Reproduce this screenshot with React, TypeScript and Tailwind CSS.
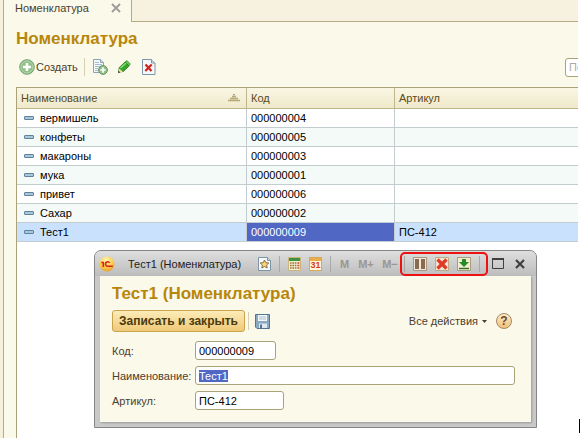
import React, { useEffect, useRef } from "react";

const rows = [
  { name: "вермишель", code: "000000004", article: "" },
  { name: "конфеты", code: "000000005", article: "" },
  { name: "макароны", code: "000000003", article: "" },
  { name: "мука", code: "000000001", article: "" },
  { name: "привет", code: "000000006", article: "" },
  { name: "Сахар", code: "000000002", article: "" },
  { name: "Тест1", code: "000000009", article: "ПС-412" },
];

function PlusCircle({ size }: { size: number }) {
  return (
    <svg width={size} height={size} viewBox="0 0 16 16">
      <circle cx="8" cy="8" r="7.3" fill="#8fc088" stroke="#7a9c74" />
      <circle cx="8" cy="8" r="6" fill="none" stroke="#b4d9ac" />
      <path d="M8 4v8M4 8h8" stroke="#fff" strokeWidth="2.6" />
    </svg>
  );
}

function CopyIcon() {
  return (
    <svg width="16" height="16" viewBox="0 0 16 16">
      <path d="M1.5.5h7l3 3v10h-10z" fill="#f4f8fb" stroke="#8ba3b5" />
      <path d="M8.500.5v3h3" fill="#cfdde8" stroke="#8ba3b5" />
      <path d="M3 3.500h4M3 5.500h7M3 7.500h5M3 9.500h3M3 11.500h3" stroke="#a5bccd" />
      <circle cx="11" cy="11" r="4.400" fill="#8fc088" stroke="#6b9164" />
      <path d="M11 8.300v5.400M8.300 11h5.400" stroke="#fff" strokeWidth="1.700" />
    </svg>
  );
}

function PencilIcon() {
  return (
    <svg width="14" height="14" viewBox="0 0 14 14">
      <path d="M1.500 12l.8-4.500L8 2l4 4-5.700 5.500z" fill="#36a32c" stroke="#1f7a1b" strokeWidth=".8" />
      <path d="M3.500 8l5.500-5" stroke="#8be06f" strokeWidth="1.600" />
      <path d="M8 2l2-1.500L13.300 4 12 6z" fill="#67c653" stroke="#1f7a1b" strokeWidth=".6" />
      <path d="M1.300 12.600l1-4.200 3.600 3.300z" fill="#f3dfa4" />
      <path d="M1 13l.6-2.200 1.700 1.600z" fill="#333" />
    </svg>
  );
}

function DeleteDocIcon() {
  return (
    <svg width="14" height="16" viewBox="0 0 14 16">
      <path d="M.5.5h9l3.500 3.500v11.500H.5z" fill="#f4f8fb" stroke="#7d96ad" />
      <path d="M9.500.5v3.500H13" fill="#c9dae8" stroke="#7d96ad" />
      <path d="M3.500 5.500l6 6.500M9.700 5.500l-6.400 6.500" stroke="#d3211d" strokeWidth="2.200" />
    </svg>
  );
}

function SortIcon() {
  return (
    <svg width="12" height="8" viewBox="0 0 12 8">
      <path d="M5 .5h2M4 2.500h4M2 4.500h8M0 6.500h12" stroke="#b5a877" strokeWidth="1.300" />
    </svg>
  );
}

function LogoIcon() {
  return (
    <svg width="16" height="16" viewBox="0 0 16 16">
      <defs>
        <radialGradient id="logo" cx=".45" cy=".25" r=".8">
          <stop offset="0" stopColor="#fff6b5" />
          <stop offset=".55" stopColor="#fbcf4b" />
          <stop offset="1" stopColor="#e59a2c" />
        </radialGradient>
      </defs>
      <circle cx="8" cy="8" r="7.600" fill="url(#logo)" />
      <path d="M2.300 6.500h2v4.500" fill="none" stroke="#d8231c" strokeWidth="1.600" />
      <path d="M10.600 6.900a2.200 2.200 0 1 0-1.500 3.300h4.700" fill="none" stroke="#d8231c" strokeWidth="1.500" />
    </svg>
  );
}

function StarIcon() {
  return (
    <svg width="13" height="14" viewBox="0 0 13 14">
      <path d="M.5.500h9l3 3v10H.5z" fill="#f6f9fb" stroke="#7e95a8" />
      <path d="M9.500.5v3h3" fill="#c7d6e2" stroke="#7e95a8" />
      <path d="M6.500 3l1.300 2.700 3 .3-2.200 2 .6 3-2.700-1.500L3.800 11l.6-3-2.200-2 3-.3z" fill="#f9d67c" stroke="#80602c" strokeWidth=".9" />
    </svg>
  );
}

function CalculatorIcon() {
  return (
    <svg width="13" height="14" viewBox="0 0 13 14">
      <path d="M.5.5h12v13H.5z" fill="#f6efcf" stroke="#c7b67c" />
      <path d="M1 1h11v3H1z" fill="#3f9142" />
      <path d="M2 6h7M2 8.500h7M2 11h7" stroke="#96703d" strokeWidth="1.300" strokeDasharray="1.600 .8" />
      <path d="M9.400 6h2M9.400 8.500h2M9.400 11h2" stroke="#c44b32" strokeWidth="1.300" />
    </svg>
  );
}

function CalendarIcon() {
  return (
    <span className="flex h-[14px] w-[13px] flex-col border border-[#d8a955] bg-[#fff6d8]">
      <span className="h-[3px] shrink-0 bg-[#e9ac4b]" />
      <span className="text-center text-[9px] leading-[9px] font-bold text-[#d2401f]">31</span>
    </span>
  );
}

function PanelsIcon() {
  return (
    <svg width="14" height="14" viewBox="0 0 14 14">
      <path d="M.5.5h13v13H.5z" fill="#eee6d6" stroke="#aa977c" />
      <path d="M2 2h4v10H2zM8 2h4v10H8z" fill="#8a6a50" />
    </svg>
  );
}

function RedCrossIcon() {
  return (
    <svg width="14" height="14" viewBox="0 0 14 14">
      <path d="M.5.5h13v13H.5z" fill="#f1e7d0" stroke="#bfa980" />
      <path d="M2.500 2.500l9 9M11.500 2.500l-9 9" stroke="#e13b2b" strokeWidth="3.400" />
    </svg>
  );
}

function DownloadIcon() {
  return (
    <svg width="14" height="14" viewBox="0 0 14 14">
      <path d="M.5.5h13v13H.5z" fill="#f1ecd2" stroke="#aa9c78" />
      <path d="M5 2h4v3h3l-5 5-5-5h3z" fill="#278c26" />
      <path d="M2 11.500h10" stroke="#2f6b2c" strokeWidth="1.400" />
    </svg>
  );
}

function FloppyIcon() {
  return (
    <svg width="15" height="15" viewBox="0 0 15 15">
      <path d="M.5.5h14v14H2l-1.500-1.500z" fill="#8aaac2" stroke="#54758f" />
      <path d="M3 1h9v6H3z" fill="#f5f9fc" />
      <path d="M4 3h7M4 5h7" stroke="#a9bccb" />
      <path d="M4 9.500h8V14H4z" fill="#dde8f0" />
      <path d="M5 10.500h2V14H5z" fill="#54758f" />
    </svg>
  );
}

function Divider() {
  return <span className="h-4 w-px shrink-0 bg-[#a9a9a9]" />;
}

const field =
  "h-[19px] rounded-[3px] border border-[#aaa27a] bg-white px-[3px] text-[11px] text-black outline-none selection:bg-[#5068c4] selection:text-white";

function ItemDialog() {
  const nameRef = useRef<HTMLInputElement>(null);
  useEffect(() => {
    nameRef.current?.focus();
    nameRef.current?.select();
  }, []);

  return (
    <section
      role="dialog"
      aria-label="Тест1 (Номенклатура)"
      className="absolute top-[250px] right-[45px] left-[94px] rounded-t-[7px] border border-[#858585] bg-[#c9c9c9]"
    >
      <header className="flex h-[25px] items-center rounded-t-[6px] bg-linear-to-b from-[#dedede] to-[#bdbdbd] pr-[11px] pl-1">
        <LogoIcon />
        <span className="ml-[13px] whitespace-nowrap text-[#222]">Тест1 (Номенклатура)</span>
        <div className="ml-auto flex items-center gap-2 text-[11px] font-bold text-[#9b9590]">
          <button type="button" aria-label="Избранное"><StarIcon /></button>
          <Divider />
          <button type="button" aria-label="Калькулятор"><CalculatorIcon /></button>
          <button type="button" aria-label="Календарь"><CalendarIcon /></button>
          <Divider />
          <button type="button" className="w-[11px]">M</button>
          <button type="button" className="w-4">M+</button>
          <button type="button" className="w-4">M−</button>
        </div>
        <div className="relative ml-[6px] flex items-center gap-2 pr-2">
          <Divider />
          <button type="button" aria-label="Панели"><PanelsIcon /></button>
          <button type="button" aria-label="Отменить"><RedCrossIcon /></button>
          <button type="button" aria-label="Загрузить"><DownloadIcon /></button>
          <Divider />
          <span className="pointer-events-none absolute -inset-y-1 right-0 -left-1 rounded-[5px] border-2 border-[#ee1111]" />
        </div>
        <button type="button" aria-label="Развернуть" className="ml-1">
          <svg width="12" height="11" viewBox="0 0 12 11">
            <path d="M.5 1h11v9.500H.5z" fill="none" stroke="#3f3f3f" />
            <path d="M0 1h12" stroke="#3f3f3f" strokeWidth="2" />
          </svg>
        </button>
        <button type="button" aria-label="Закрыть" className="ml-[11px]">
          <svg width="10" height="10" viewBox="0 0 10 10">
            <path d="M1 1l8 8M9 1L1 9" stroke="#3f3f3f" strokeWidth="2.200" />
          </svg>
        </button>
      </header>

      <div className="mx-[5px] mb-[5px] bg-[#fbf9e9] px-3 pt-2 pb-3 shadow-[1px_1px_2px_#999]">
        <h2 className="text-[17px] leading-5 font-bold whitespace-nowrap text-[#b8860b]">Тест1 (Номенклатура)</h2>
        <div className="mt-[6px] flex items-center">
          <button
            type="button"
            className="h-[22px] w-[133px] rounded-[3px] border border-[#c9a44c] bg-linear-to-b from-[#fcecb8] to-[#efc978] text-[12px] font-bold whitespace-nowrap text-[#4d3a0c]"
          >
            Записать и закрыть
          </button>
          <span className="ml-[3px] h-[18px] w-px bg-[#d6d0b0]" />
          <button type="button" aria-label="Записать" className="ml-[6px]"><FloppyIcon /></button>
          <button type="button" className="ml-auto flex items-center gap-1 text-[#4b4030]">
            Все действия
            <svg width="5" height="3" viewBox="0 0 5 3"><path d="M0 0h5L2.500 3z" fill="#4b4030" /></svg>
          </button>
          <button
            type="button"
            aria-label="Справка"
            className="mr-[7px] ml-[9px] h-4 w-4 rounded-full border border-[#a58a66] bg-linear-to-b from-[#fdebc8] to-[#f3bf78] text-[12px] leading-[14px] font-bold text-[#6a4a2a]"
          >
            ?
          </button>
        </div>
        <form className="mt-[9px] grid grid-cols-[83px_1fr] items-center gap-y-[6px] pr-1 text-[#4b4030]">
          <label htmlFor="code">Код:</label>
          <input id="code" defaultValue="000000009" className={`${field} w-[81px]`} />
          <label htmlFor="name">Наименование:</label>
          <input id="name" ref={nameRef} defaultValue="Тест1" className={`${field} w-full`} />
          <label htmlFor="article">Артикул:</label>
          <input id="article" defaultValue="ПС-412" className={`${field} w-[89px]`} />
        </form>
      </div>
    </section>
  );
}

export default function App() {
  return (
    <div className="relative flex h-screen w-full overflow-hidden bg-white font-['Liberation_Sans',Arial,sans-serif] text-[11px] leading-[14px]">
      <div className="w-1 shrink-0 border-r border-[#b5ac85] bg-[#f6f0da]" />
      <main className="flex min-w-0 flex-1 flex-col overflow-hidden bg-[#fbf9e9]">
        <nav className="flex h-[22px] shrink-0">
          <div className="flex w-[127px] shrink-0 items-center justify-between pr-[10px] pb-[6px] pl-[11px] text-[#4b4030]">
            <span>Номенклатура</span>
            <button type="button" aria-label="Закрыть вкладку">
              <svg width="10" height="10" viewBox="0 0 10 10">
                <path d="M1 1l8 8M9 1L1 9" stroke="#9b9b9b" strokeWidth="1.800" />
              </svg>
            </button>
          </div>
          <div className="flex-1 border-b border-l border-[#b5ac85] bg-[#f7f2df]" />
        </nav>

        <h1 className="mt-[7px] pl-3 text-[17px] leading-5 font-bold text-[#b8860b]">Номенклатура</h1>

        <div className="mt-2 flex h-5 shrink-0 items-center pl-[15px]">
          <button type="button" className="flex items-center gap-px text-[#4b4030]">
            <PlusCircle size={16} />
            Создать
          </button>
          <span className="ml-[6px] h-[18px] w-px bg-[#d6d0b0]" />
          <button type="button" aria-label="Скопировать" className="ml-[7px]"><CopyIcon /></button>
          <button type="button" aria-label="Изменить" className="ml-[9px]"><PencilIcon /></button>
          <button type="button" aria-label="Удалить" className="ml-[11px]"><DeleteDocIcon /></button>
          <div className="ml-auto w-[13px] overflow-hidden">
            <input
              type="text"
              aria-label="Поиск"
              placeholder="Поиск"
              className="block h-[19px] w-40 rounded-[3px] border border-[#aaa27a] bg-white px-[3px] outline-none placeholder:text-[#aaa]"
            />
          </div>
        </div>

        <div className="mt-[10px] ml-3 flex-1 border-t border-l border-[#aaa27a] bg-white">
          <table className="w-full table-fixed border-separate border-spacing-0 text-left">
            <colgroup>
              <col className="w-[230px]" />
              <col className="w-[148px]" />
              <col />
            </colgroup>
            <thead>
              <tr className="h-[21px] bg-linear-to-b from-[#f9f6e4] to-[#efe8c9] text-[#5a4a20]">
                <th className="border-r border-b border-[#c0b68c] py-0 pr-[6px] pl-1 font-normal">
                  <span className="flex items-center justify-between">Наименование<SortIcon /></span>
                </th>
                <th className="border-r border-b border-[#c0b68c] py-0 pl-1 font-normal">Код</th>
                <th className="border-b border-[#c0b68c] py-0 pl-1 font-normal">Артикул</th>
              </tr>
            </thead>
            <tbody>
              {rows.map((row, i) => {
                const selected = i === rows.length - 1;
                const cell = "border-b border-[#c3cdd0] p-0";
                return (
                  <tr key={row.code} className={`h-[19px] ${selected ? "bg-[#c9e1fd]" : i % 2 ? "bg-[#f4faf8]" : "bg-white"}`}>
                    <td className={`${cell} border-r`}>
                      <span className="flex items-center gap-[6px] pl-[7px]">
                        <span className="h-1 w-[10px] rounded-[1px] border border-[#5f8199] bg-[#a9c6da]" />
                        {row.name}
                      </span>
                    </td>
                    <td className={`${cell} border-r ${selected ? "bg-[#5068c4] text-white" : ""}`}>
                      <span className="pl-1">{row.code}</span>
                    </td>
                    <td className={cell}>
                      <span className="pl-1">{row.article}</span>
                    </td>
                  </tr>
                );
              })}
            </tbody>
          </table>
        </div>
      </main>
      <div className="flex w-1 shrink-0 flex-col justify-end pb-[5px] pl-px">
        <span className="h-[14px] w-px bg-black" />
      </div>
      <ItemDialog />
    </div>
  );
}
